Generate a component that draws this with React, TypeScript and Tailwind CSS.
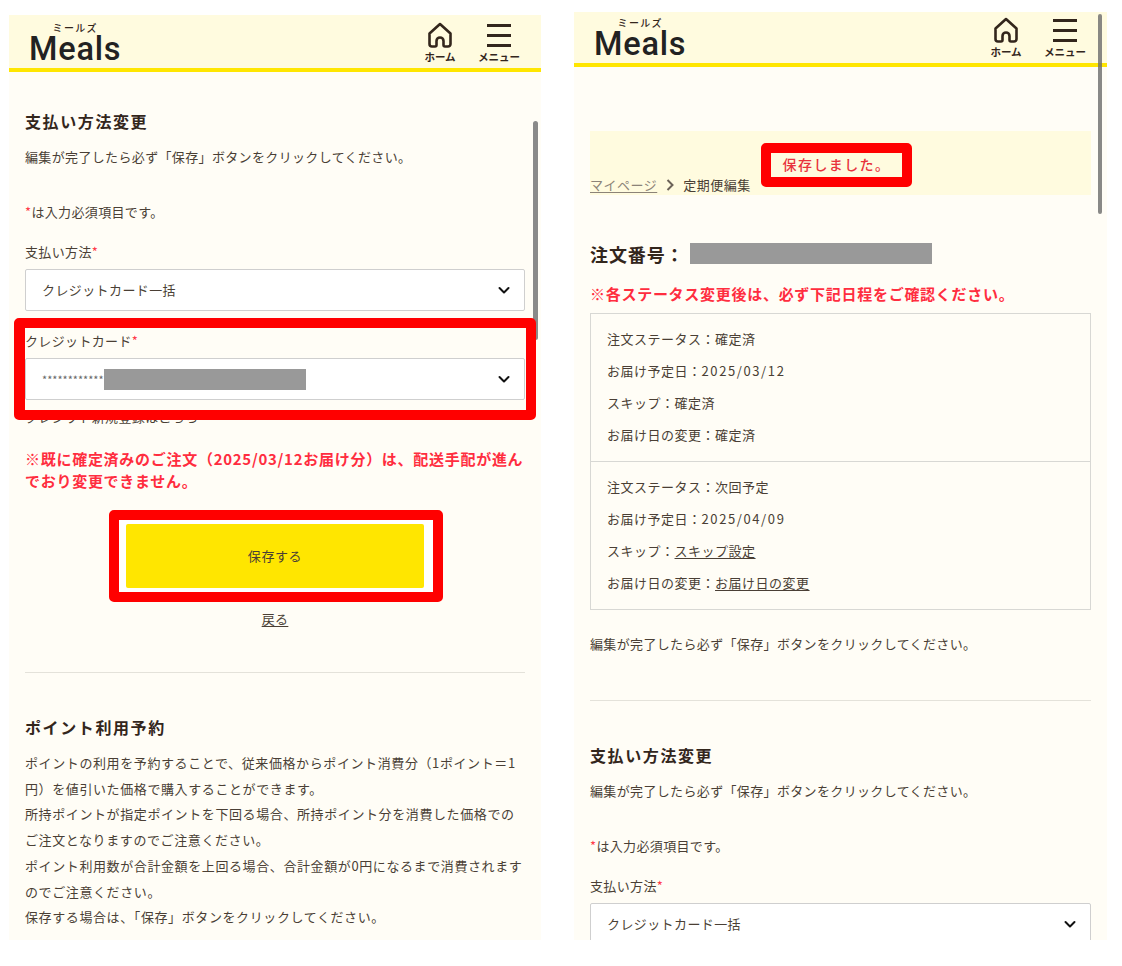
const JP = { fontFamily: '"Noto Sans CJK JP", sans-serif' }

function Req() {
  return <span className="text-[#ff3b4a]">*</span>
}

function Chevron() {
  return (
    <svg width="14" height="14" viewBox="0 0 14 14" fill="none" className="shrink-0">
      <path d="M2.500 5 7 9.500 11.500 5" stroke="#111" strokeWidth="2" strokeLinecap="round" strokeLinejoin="round" />
    </svg>
  )
}

function Header({ height }: { height: string }) {
  return (
    <header className={`${height} flex shrink-0 items-end justify-between border-b-4 border-[#ffe600] bg-[#fffbdf] pl-[20px] pr-[21px] pb-[5px] text-[#33261c]`}>
      <div className="-mb-[3px] flex flex-col items-center">
        <span className="text-[10px] leading-[11px] font-medium tracking-[1.300px]" style={JP}>ミールズ</span>
        <span className="font-['Roboto',sans-serif] text-[32.500px] leading-[33px] font-medium tracking-[0.8px] text-[#222]">Meals</span>
      </div>
      <nav className="flex items-end gap-[22px]">
        <div className="flex w-[32px] flex-col items-center">
          <svg width="26" height="27" viewBox="0 0 26 27" fill="none" className="mb-[1px]">
            <path
              d="M13 2 2.500 11.500V22a2.500 2.500 0 0 0 2.500 2.500h3a1.500 1.500 0 0 0 1.500-1.500V19a3.500 3.500 0 0 1 7 0v4a1.500 1.500 0 0 0 1.500 1.500h3a2.500 2.500 0 0 0 2.500-2.500V11.500Z"
              stroke="#33261c"
              strokeWidth="2.600"
              strokeLinejoin="round"
            />
          </svg>
          <span className="text-[10.500px] leading-[13px] font-bold whitespace-nowrap" style={JP}>ホーム</span>
        </div>
        <div className="flex w-[42px] flex-col items-center">
          <div className="flex h-[27px] w-[24px] flex-col justify-end gap-[7px] pb-[3px]">
            <div className="h-[3px] bg-[#33261c]" />
            <div className="h-[3px] bg-[#33261c]" />
            <div className="h-[3px] bg-[#33261c]" />
          </div>
          <span className="text-[10.500px] leading-[13px] font-bold whitespace-nowrap" style={JP}>メニュー</span>
        </div>
      </nav>
    </header>
  )
}

function Select({ children }: { children: React.ReactNode }) {
  return (
    <div className="flex h-[42px] items-center justify-between rounded-[2px] border border-[#cfcfcf] bg-white pl-[16px] pr-[13px] text-[13px] tracking-[0.4px]">
      <div className="flex items-center">{children}</div>
      <Chevron />
    </div>
  )
}

function PaymentIntro({ className = '' }: { className?: string }) {
  return (
    <>
      <h2 className={`${className} text-[16px] leading-[22px] font-bold tracking-[1.6px] text-[#33261c]`}>支払い方法変更</h2>
      <p className="mt-[15px] text-[13px] leading-[20px] tracking-[0.35px]">編集が完了したら必ず「保存」ボタンをクリックしてください。</p>
      <p className="mt-[35px] text-[13px] leading-[20px] tracking-[0.35px]"><Req />は入力必須項目です。</p>
      <p className="mt-[20px] text-[13px] leading-[20px] tracking-[0.35px]">支払い方法<Req /></p>
      <div className="mt-[7px]">
        <Select>クレジットカード一括</Select>
      </div>
    </>
  )
}

function Row({ label, value, link, date }: { label: string; value: string; link?: boolean; date?: boolean }) {
  return (
    <p className="text-[13px] leading-[32px] tracking-[0.5px]">
      {label}：
      {link ? <span className="underline underline-offset-2">{value}</span> : <span className={date ? 'tracking-[1.600px]' : ''}>{value}</span>}
    </p>
  )
}

function LeftPanel() {
  return (
    <section className="relative mt-[15px] ml-[9px] flex h-[925px] w-[532px] flex-col overflow-hidden bg-[#fffdf6]">
      <Header height="h-[57px]" />
      <div className="px-[16px] pt-[38px] text-[#4a3f35]">
        <PaymentIntro />
        <p className="mt-[20px] text-[13px] leading-[20px] tracking-[0.35px]">クレジットカード<Req /></p>
        <div className="mt-[7px]">
          <Select>
            <span className="text-[11px] tracking-[0px] text-[#666]">************</span>
            <span className="block h-[21px] w-[202px] bg-[#999]" />
          </Select>
        </div>
        <p className="mt-[7px] text-[13px] leading-[20px] tracking-[0.35px]">クレジット新規登録はこちら</p>
        <p className="mt-[21px] text-[15px] leading-[22px] font-bold tracking-[0.72px] text-[#ff2d3f]">
          ※既に確定済みのご注文（2025/03/12お届け分）は、配送手配が進んでおり変更できません。
        </p>
        <div className="mt-[18px] ml-[84px] flex h-[92px] w-[334px] items-center rounded-[5px] border-[10px] border-[#ff0000] bg-white pl-[7px]">
          <div className="flex h-[64px] w-[298px] items-center justify-center rounded-[2px] bg-[#ffe600] text-[13px] tracking-[0.6px]">保存する</div>
        </div>
        <p className="mt-[7px] text-center text-[13px] leading-[20px] tracking-[0.35px] underline underline-offset-2">戻る</p>
        <hr className="mt-[43px] border-[#e4e2da]" />
        <h2 className="mt-[43px] text-[16px] leading-[22px] font-bold tracking-[1.6px] text-[#33261c]">ポイント利用予約</h2>
        <p className="mt-[12px] text-[13px] leading-[25.7px] tracking-[0.6px]">
          ポイントの利用を予約することで、従来価格からポイント消費分（1ポイント＝1円）を値引いた価格で購入することができます。<br />
          所持ポイントが指定ポイントを下回る場合、所持ポイント分を消費した価格でのご注文となりますのでご注意ください。<br />
          ポイント利用数が合計金額を上回る場合、合計金額が0円になるまで消費されますのでご注意ください。<br />
          保存する場合は、「保存」ボタンをクリックしてください。
        </p>
      </div>
      {/* scrollbar */}
      <div className="absolute top-[106px] right-[3px] h-[219px] w-[5px] rounded-full bg-[#8a8a8a]" />
      {/* red highlight */}
      <div className="absolute top-[303px] left-[5px] h-[102px] w-[522px] rounded-[5px] border-[10px] border-l-[11px] border-[#ff0000]" />
    </section>
  )
}

function RightPanel() {
  return (
    <section className="relative mt-[12px] ml-[33px] flex h-[928px] w-[533px] flex-col overflow-hidden bg-[#fffdf6]">
      <Header height="h-[55px]" />
      <div className="px-[16px] pt-[64px] text-[#4a3f35]">
        <div className="flex h-[64px] items-end bg-[#fffbdf] pb-[1px] text-[13px] leading-[18px] tracking-[0.5px]">
          <span className="text-[#8c8378] underline underline-offset-2">マイページ</span>
          <svg width="10" height="12" viewBox="0 0 10 12" fill="none" className="mx-[8px] mb-[3px]">
            <path d="M2.500 1 7.500 6 2.500 11" stroke="#6b6258" strokeWidth="2" />
          </svg>
          <span>定期便編集</span>
        </div>
        <div className="mt-[46px] flex h-[28px] items-start">
          <h1 className="text-[18px] leading-[27px] font-bold tracking-[0.9px] text-[#33261c]">注文番号：</h1>
          <span className="mt-[2px] ml-[5px] block h-[21px] w-[242px] bg-[#999]" />
        </div>
        <p className="mt-[14px] text-[15px] leading-[22px] font-bold tracking-[0.72px] text-[#ff2d3f]">※各ステータス変更後は、必ず下記日程をご確認ください。</p>
        <div className="mt-[8px] border border-[#d8d8d4]">
          <div className="px-[16px] pt-[9px] pb-[10px]">
            <Row label="注文ステータス" value="確定済" />
            <Row label="お届け予定日" value="2025/03/12" date />
            <Row label="スキップ" value="確定済" />
            <Row label="お届け日の変更" value="確定済" />
          </div>
          <div className="border-t border-[#d8d8d4] px-[16px] pt-[9px] pb-[10px]">
            <Row label="注文ステータス" value="次回予定" />
            <Row label="お届け予定日" value="2025/04/09" date />
            <Row label="スキップ" value="スキップ設定" link />
            <Row label="お届け日の変更" value="お届け日の変更" link />
          </div>
        </div>
        <p className="mt-[24px] text-[13px] leading-[20px] tracking-[0.35px]">編集が完了したら必ず「保存」ボタンをクリックしてください。</p>
        <hr className="mt-[46px] border-[#e4e2da]" />
        <PaymentIntro className="mt-[43px]" />
      </div>
      {/* scrollbar */}
      <div className="absolute top-[2px] right-[5px] h-[200px] w-[4px] rounded-full bg-[#6b6b6b]/80" />
      {/* saved notice with highlight */}
      <div className="absolute top-[131px] left-[187px] flex h-[44px] w-[151px] items-center justify-center rounded-[5px] border-[10px] border-[#ff0000] bg-[#fffbdf] pb-[3px] text-[14px] leading-[20px] font-medium tracking-[1.400px] whitespace-nowrap text-[#e8323c]">保存しました。</div>
    </section>
  )
}

export default function App() {
  return (
    <div className="flex h-[966px] w-[1122px] items-start overflow-hidden bg-white" style={JP}>
      <LeftPanel />
      <RightPanel />
    </div>
  )
}
